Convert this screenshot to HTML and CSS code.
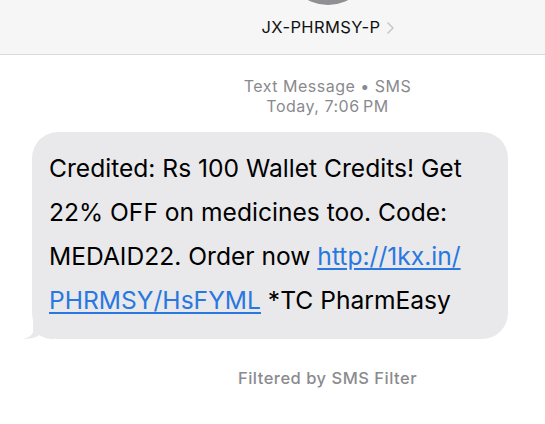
FILE: index.html
```html
<!DOCTYPE html>
<html lang="en">
<head>
  <meta charset="UTF-8">
  <title>JX-PHRMSY-P</title>
  <link rel="stylesheet" href="styles.css">
</head>
<body>
  <div class="top">
    <div class="avatar"></div>
    <div class="name">JX-PHRMSY-P<svg class="chev" width="7" height="12" viewBox="0 0 7 12"><path d="M1 1 L6 6 L1 11" fill="none" stroke="#c4c4c7" stroke-width="1.4" stroke-linecap="round" stroke-linejoin="round"/></svg></div>
  </div>

  <div class="meta">
    <div>Text Message &bull; SMS</div>
    <div>Today, 7:06&#8201;PM</div>
  </div>

  <div class="thread">
    <div class="bubble">
      Credited: Rs 100 Wallet Credits! Get<br>
      22% OFF on medicines too. Code:<br>
      MEDAID22. Order now <a href="#">http://1kx.in/<br>PHRMSY/HsFYML</a> *TC PharmEasy
      <svg class="tail" width="32" height="22" viewBox="0 0 32 22">
        <path d="M11 0 V14 C11 18 7 20.5 1 21.5 C8 22.3 14 20.6 17.5 18 C21 20.5 25 22 32 22 V0 Z" fill="#e9e9eb"/>
      </svg>
    </div>
  </div>

  <div class="filter">Filtered by SMS Filter</div>
</body>
</html>
```

FILE: styles.css
```css
body { margin: 0; background: #fff; font-family: Inter, "Liberation Sans", sans-serif; color: #000; overflow: hidden; }
.top { height: 55px; box-sizing: border-box; background: #f6f6f6; border-bottom: 1px solid #d9d9dc; padding-left: 110px; overflow: hidden; }
.avatar { width: 86px; height: 86px; border-radius: 50%; margin: -81px auto 0; background: linear-gradient(#a9a9ae, #8e8e93); }
.name { display: flex; justify-content: center; align-items: center; gap: 6px; font-size: 16.5px; margin-top: 12px; letter-spacing: 0.4px; color: #111; }
.chev { flex: none; margin-top: 1px; }
.meta { padding-left: 110px; margin-top: 21px; text-align: center; font-size: 16px; line-height: 20px; letter-spacing: 0.5px; color: #8a8a8e; }
.thread { padding-left: 32px; margin-top: 16px; }
.bubble { position: relative; width: 476px; box-sizing: border-box; padding: 14px 6px 17px 17px; background: #e9e9eb; border-radius: 26px; font-size: 24.6px; line-height: 44px; }
.bubble a { color: #2878e0; text-decoration: underline; text-underline-offset: 3px; }
.tail { position: absolute; left: -10px; bottom: 0; }
.filter { padding-left: 110px; margin-top: 29px; text-align: center; font-size: 16.5px; font-weight: 500; letter-spacing: 0.5px; color: #8a8a8e; }
```
